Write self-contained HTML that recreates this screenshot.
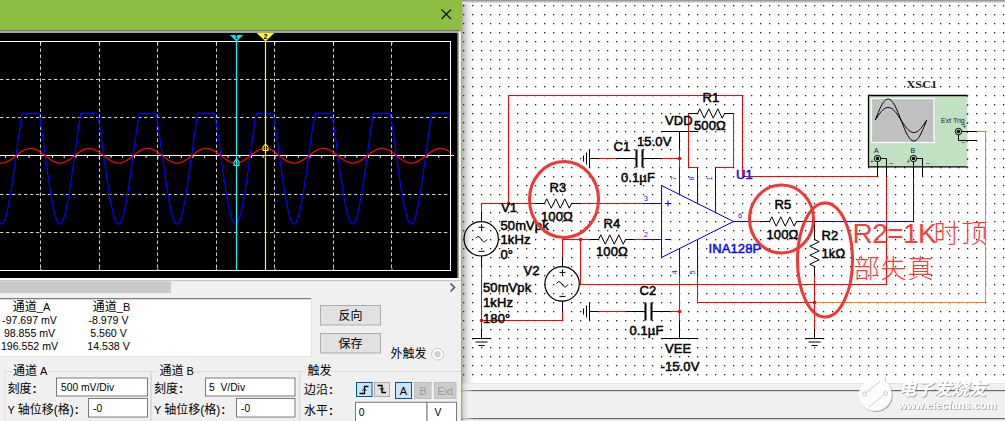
<!DOCTYPE html>
<html lang="zh"><head><meta charset="utf-8"><title>Oscilloscope - INA128P circuit</title>
<style>
html,body{margin:0;padding:0;background:#fff;}
body{width:1005px;height:421px;overflow:hidden;}
svg{display:block;}
text{font-family:"Liberation Sans","Noto Sans CJK SC",sans-serif;}
.cl{font-size:13px;font-weight:normal;fill:#000;stroke:#000;stroke-width:0.5px;letter-spacing:0.1px;}
.clb{font-size:13px;font-weight:normal;fill:#0a0aff;stroke:#0a0aff;stroke-width:0.5px;letter-spacing:0.1px;}
.pin{font-size:7.5px;fill:#2020ff;}
.ui{font-size:11px;fill:#000;}
.ro{font-size:10.6px;fill:#000;}
.in{font-size:10.3px;fill:#000;}
.uic{font-size:12px;fill:#000;}
.dis{font-size:11px;fill:#9a9a9a;}
.ann{font-size:26px;font-weight:300;fill:#fb3d3a;font-family:"Liberation Sans","Noto Sans CJK SC",sans-serif;}
.annl{font-size:28px;letter-spacing:-0.55px;}
.xsc{font-family:"Liberation Serif","Noto Serif CJK SC",serif;font-size:11px;font-weight:bold;fill:#1a1a1a;letter-spacing:0.2px;}
.tiny{font-size:7px;fill:#222;}
.tiny2{font-size:6.5px;fill:#222;}
.wm1{font-size:17px;font-weight:bold;font-style:italic;fill:#fff;}
.wm2{font-size:11px;font-weight:bold;fill:#fff;}
</style></head><body>
<svg width="1005" height="421" viewBox="0 0 1005 421">
<defs>
<pattern id="dots" x="463" y="5" width="9" height="9" patternUnits="userSpaceOnUse">
<rect x="0" y="0" width="1.3" height="1.3" fill="#1c1c1c"/>
</pattern>
<linearGradient id="shl" x1="0" x2="1" y1="0" y2="0">
<stop offset="0" stop-color="#b4b4b4"/><stop offset="0.35" stop-color="#e0e0e0"/><stop offset="1" stop-color="#ffffff" stop-opacity="0"/>
</linearGradient>
<linearGradient id="sht" x1="0" x2="0" y1="0" y2="1">
<stop offset="0" stop-color="#8a8a8a"/><stop offset="0.6" stop-color="#d0d0d0"/><stop offset="1" stop-color="#ffffff"/>
</linearGradient>
<filter id="wmsh" x="-10%" y="-10%" width="120%" height="130%">
<feDropShadow dx="0.8" dy="0.8" stdDeviation="0.6" flood-color="#666" flood-opacity="0.7"/>
</filter>
<clipPath id="scopeclip"><rect x="0" y="41" width="450" height="230"/></clipPath>
</defs>
<rect x="462.00" y="0.00" width="543.00" height="383.00" fill="#ffffff" />
<rect x="462.00" y="0.00" width="15.00" height="383.00" fill="url(#shl)" />
<rect x="462.00" y="0.00" width="543.00" height="3.50" fill="url(#sht)" />
<rect x="462.00" y="4.00" width="543.00" height="379.00" fill="url(#dots)" />
<rect x="462.00" y="383.00" width="543.00" height="38.00" fill="#f0f0f0" />
<rect x="462.00" y="383.00" width="543.00" height="1.00" fill="#e2e2e2" />
<rect x="462.00" y="390.00" width="543.00" height="1.20" fill="#6a6a6a" />
<rect x="462.00" y="418.00" width="543.00" height="1.20" fill="#6a6a6a" />
<rect x="462.00" y="383.00" width="12.00" height="38.00" fill="url(#shl)" opacity="0.6"/>
<g id="schematic" stroke-linecap="butt">
<polyline points="508.50,203.50 508.50,95.50 742.50,95.50 742.50,176.50 877.50,176.50" fill="none" stroke="#ff0000" stroke-width="1" />
<polyline points="481.50,212.50 481.50,203.50 535.50,203.50" fill="none" stroke="#ff0000" stroke-width="1" />
<line x1="580.50" y1="203.50" x2="643.50" y2="203.50" stroke="#ff0000" stroke-width="1" />
<line x1="643.50" y1="203.50" x2="661.50" y2="203.50" stroke="#0000ff" stroke-width="1" />
<line x1="535.50" y1="203.50" x2="544.50" y2="203.50" stroke="#000000" stroke-width="1" />
<polyline points="544.50,203.50 546.75,198.80 551.25,208.20 555.75,198.80 560.25,208.20 564.75,198.80 569.25,208.20 571.50,203.50" fill="none" stroke="#000000" stroke-width="1" stroke-linejoin="miter"/>
<line x1="571.50" y1="203.50" x2="580.50" y2="203.50" stroke="#000000" stroke-width="1" />
<line x1="589.50" y1="239.50" x2="598.50" y2="239.50" stroke="#000000" stroke-width="1" />
<polyline points="598.50,239.50 600.75,234.80 605.25,244.20 609.75,234.80 614.25,244.20 618.75,234.80 623.25,244.20 625.50,239.50" fill="none" stroke="#000000" stroke-width="1" stroke-linejoin="miter"/>
<line x1="625.50" y1="239.50" x2="634.50" y2="239.50" stroke="#000000" stroke-width="1" />
<line x1="688.50" y1="113.50" x2="697.50" y2="113.50" stroke="#000000" stroke-width="1" />
<polyline points="697.50,113.50 699.75,108.80 704.25,118.20 708.75,108.80 713.25,118.20 717.75,108.80 722.25,118.20 724.50,113.50" fill="none" stroke="#000000" stroke-width="1" stroke-linejoin="miter"/>
<line x1="724.50" y1="113.50" x2="733.50" y2="113.50" stroke="#000000" stroke-width="1" />
<line x1="760.50" y1="221.50" x2="769.50" y2="221.50" stroke="#000000" stroke-width="1" />
<polyline points="769.50,221.50 771.75,216.80 776.25,226.20 780.75,216.80 785.25,226.20 789.75,216.80 794.25,226.20 796.50,221.50" fill="none" stroke="#000000" stroke-width="1" stroke-linejoin="miter"/>
<line x1="796.50" y1="221.50" x2="805.50" y2="221.50" stroke="#000000" stroke-width="1" />
<polyline points="562.50,257.50 562.50,239.50 589.50,239.50" fill="none" stroke="#ff0000" stroke-width="1" />
<line x1="634.50" y1="239.50" x2="643.50" y2="239.50" stroke="#ff0000" stroke-width="1" />
<line x1="643.50" y1="239.50" x2="661.50" y2="239.50" stroke="#0000ff" stroke-width="1" />
<polyline points="580.50,239.50 580.50,284.50 886.50,284.50 886.50,176.50" fill="none" stroke="#ff0000" stroke-width="1" />
<line x1="481.50" y1="266.50" x2="481.50" y2="329.50" stroke="#ff0000" stroke-width="1" />
<polyline points="481.50,320.50 562.50,320.50 562.50,311.50" fill="none" stroke="#ff0000" stroke-width="1" />
<circle cx="481.20" cy="238.80" r="17.2" fill="none" stroke="#000000" stroke-width="1.2"/>
<line x1="481.50" y1="212.50" x2="481.50" y2="221.80" stroke="#000000" stroke-width="1" />
<line x1="481.50" y1="255.80" x2="481.50" y2="266.50" stroke="#000000" stroke-width="1" />
<line x1="478.50" y1="227.30" x2="484.50" y2="227.30" stroke="#000000" stroke-width="1" />
<line x1="481.50" y1="224.30" x2="481.50" y2="230.30" stroke="#000000" stroke-width="1" />
<line x1="478.50" y1="251.30" x2="484.50" y2="251.30" stroke="#000000" stroke-width="1" />
<path d="M475.70,238.30 q2.2,-3.4 4.2,-0.8 l2.6,3.4 q2,2.4 4.4,-1.4" fill="none" stroke="#000000" stroke-width="1"/>
<circle cx="562.10" cy="283.90" r="17.2" fill="none" stroke="#000000" stroke-width="1.2"/>
<line x1="562.50" y1="257.50" x2="562.50" y2="266.90" stroke="#000000" stroke-width="1" />
<line x1="562.50" y1="300.90" x2="562.50" y2="311.50" stroke="#000000" stroke-width="1" />
<line x1="559.50" y1="272.40" x2="565.50" y2="272.40" stroke="#000000" stroke-width="1" />
<line x1="562.50" y1="269.40" x2="562.50" y2="275.40" stroke="#000000" stroke-width="1" />
<line x1="559.50" y1="296.40" x2="565.50" y2="296.40" stroke="#000000" stroke-width="1" />
<path d="M556.60,283.40 q2.2,-3.4 4.2,-0.8 l2.6,3.4 q2,2.4 4.4,-1.4" fill="none" stroke="#000000" stroke-width="1"/>
<line x1="481.50" y1="329.50" x2="481.50" y2="338.50" stroke="#000000" stroke-width="1" />
<line x1="472.00" y1="338.50" x2="491.00" y2="338.50" stroke="#000000" stroke-width="1" />
<line x1="475.50" y1="342.00" x2="487.50" y2="342.00" stroke="#000000" stroke-width="1" />
<line x1="478.50" y1="345.50" x2="484.50" y2="345.50" stroke="#000000" stroke-width="1" />
<line x1="805.00" y1="338.50" x2="824.00" y2="338.50" stroke="#000000" stroke-width="1" />
<line x1="808.50" y1="342.00" x2="820.50" y2="342.00" stroke="#000000" stroke-width="1" />
<line x1="811.50" y1="345.50" x2="817.50" y2="345.50" stroke="#000000" stroke-width="1" />
<line x1="589.50" y1="149.50" x2="589.50" y2="167.50" stroke="#000000" stroke-width="1" />
<line x1="586.50" y1="152.50" x2="586.50" y2="164.50" stroke="#000000" stroke-width="1" />
<line x1="583.50" y1="155.50" x2="583.50" y2="161.50" stroke="#000000" stroke-width="1" />
<line x1="589.50" y1="158.50" x2="598.50" y2="158.50" stroke="#000000" stroke-width="1" />
<line x1="598.50" y1="158.50" x2="616.50" y2="158.50" stroke="#ff0000" stroke-width="1" />
<line x1="616.50" y1="158.50" x2="636.50" y2="158.50" stroke="#000000" stroke-width="1" />
<line x1="636.50" y1="149.50" x2="636.50" y2="167.50" stroke="#000000" stroke-width="2" />
<line x1="642.50" y1="149.50" x2="642.50" y2="167.50" stroke="#000000" stroke-width="2" />
<line x1="642.50" y1="158.50" x2="661.50" y2="158.50" stroke="#000000" stroke-width="1" />
<line x1="661.50" y1="158.50" x2="679.50" y2="158.50" stroke="#ff0000" stroke-width="1" />
<line x1="589.50" y1="302.50" x2="589.50" y2="320.50" stroke="#000000" stroke-width="1" />
<line x1="586.50" y1="305.50" x2="586.50" y2="317.50" stroke="#000000" stroke-width="1" />
<line x1="583.50" y1="308.50" x2="583.50" y2="314.50" stroke="#000000" stroke-width="1" />
<line x1="589.50" y1="311.50" x2="598.50" y2="311.50" stroke="#000000" stroke-width="1" />
<line x1="598.50" y1="311.50" x2="625.50" y2="311.50" stroke="#ff0000" stroke-width="1" />
<line x1="625.50" y1="311.50" x2="645.50" y2="311.50" stroke="#000000" stroke-width="1" />
<line x1="645.50" y1="302.50" x2="645.50" y2="320.50" stroke="#000000" stroke-width="2" />
<line x1="651.50" y1="302.50" x2="651.50" y2="320.50" stroke="#000000" stroke-width="2" />
<line x1="651.50" y1="311.50" x2="670.50" y2="311.50" stroke="#000000" stroke-width="1" />
<line x1="670.50" y1="311.50" x2="679.50" y2="311.50" stroke="#ff0000" stroke-width="1" />
<line x1="661.50" y1="131.50" x2="697.50" y2="131.50" stroke="#000000" stroke-width="1" />
<line x1="679.50" y1="131.50" x2="679.50" y2="149.50" stroke="#000000" stroke-width="1" />
<line x1="679.50" y1="149.50" x2="679.50" y2="167.50" stroke="#ff0000" stroke-width="1" />
<line x1="661.50" y1="338.50" x2="697.50" y2="338.50" stroke="#000000" stroke-width="1" />
<line x1="679.50" y1="320.50" x2="679.50" y2="338.50" stroke="#000000" stroke-width="1" />
<line x1="679.50" y1="275.50" x2="679.50" y2="320.50" stroke="#ff0000" stroke-width="1" />
<polyline points="688.50,113.50 688.50,167.50 697.50,167.50" fill="none" stroke="#ff0000" stroke-width="1" />
<polyline points="733.50,113.50 733.50,167.50 715.50,167.50" fill="none" stroke="#ff0000" stroke-width="1" />
<polyline points="697.50,275.50 697.50,302.50 814.50,302.50" fill="none" stroke="#ff0000" stroke-width="1" />
<line x1="814.50" y1="275.50" x2="814.50" y2="329.50" stroke="#ff0000" stroke-width="1" />
<line x1="814.50" y1="329.50" x2="814.50" y2="338.50" stroke="#000000" stroke-width="1" />
<polyline points="976.50,131.50 985.50,131.50 985.50,302.50 814.50,302.50" fill="none" stroke="#ff8000" stroke-width="1" />
<line x1="751.50" y1="221.50" x2="760.50" y2="221.50" stroke="#ff0000" stroke-width="1" />
<line x1="805.50" y1="221.50" x2="814.50" y2="221.50" stroke="#ff0000" stroke-width="1" />
<line x1="814.50" y1="221.50" x2="814.50" y2="239.50" stroke="#000000" stroke-width="1" />
<polyline points="814.50,239.50 819.20,241.75 809.80,246.25 819.20,250.75 809.80,255.25 819.20,259.75 809.80,264.25 814.50,266.50" fill="none" stroke="#000000" stroke-width="1" />
<line x1="814.50" y1="266.50" x2="814.50" y2="275.50" stroke="#000000" stroke-width="1" />
<polyline points="814.50,221.50 913.50,221.50 913.50,176.50" fill="none" stroke="#0000ff" stroke-width="1" />
<polyline points="661.50,185.50 733.50,221.50 661.50,257.50 661.50,185.50" fill="none" stroke="#0000ff" stroke-width="1" stroke-linejoin="round"/>
<line x1="679.50" y1="167.50" x2="679.50" y2="194.50" stroke="#0000ff" stroke-width="1" />
<line x1="697.50" y1="167.50" x2="697.50" y2="203.50" stroke="#0000ff" stroke-width="1" />
<line x1="715.50" y1="167.50" x2="715.50" y2="212.50" stroke="#0000ff" stroke-width="1" />
<line x1="679.50" y1="248.50" x2="679.50" y2="275.50" stroke="#0000ff" stroke-width="1" />
<line x1="697.50" y1="239.50" x2="697.50" y2="275.50" stroke="#0000ff" stroke-width="1" />
<line x1="733.50" y1="221.50" x2="751.50" y2="221.50" stroke="#0000ff" stroke-width="1" />
<line x1="665.00" y1="203.50" x2="671.00" y2="203.50" stroke="#0000ff" stroke-width="1" />
<line x1="668.00" y1="200.50" x2="668.00" y2="206.50" stroke="#0000ff" stroke-width="1" />
<line x1="665.00" y1="239.50" x2="671.00" y2="239.50" stroke="#0000ff" stroke-width="1" />
<circle cx="508.50" cy="203.50" r="1.8" fill="#ff0000"/>
<circle cx="580.50" cy="239.50" r="1.8" fill="#ff0000"/>
<circle cx="679.50" cy="158.50" r="1.8" fill="#ff0000"/>
<circle cx="679.50" cy="311.50" r="1.8" fill="#ff0000"/>
<circle cx="481.50" cy="320.50" r="1.8" fill="#ff0000"/>
<circle cx="814.50" cy="302.50" r="1.8" fill="#ff0000"/>
<rect x="868.00" y="95.00" width="99.50" height="72.00" fill="#c2e0c2" />
<polyline points="967.50,95.50 868.50,95.50 868.50,166.80 967.50,166.80" fill="none" stroke="#000" stroke-width="1.3" />
<line x1="967.30" y1="95.00" x2="967.30" y2="167.00" stroke="#333" stroke-width="1" stroke-dasharray="1.5 7.5" stroke-dashoffset="-0.5"/>
<rect x="871.50" y="98.50" width="62.50" height="44.00" fill="#c0c0c0" stroke="#ffffff" stroke-width="1.2" />
<polyline points="875.30,120.00 876.29,117.47 877.28,114.97 878.27,112.55 879.25,110.24 880.24,108.07 881.23,106.07 882.22,104.28 883.21,102.72 884.20,101.41 885.18,100.36 886.17,99.61 887.16,99.15 888.15,99.00 889.14,99.15 890.13,99.61 891.12,100.36 892.10,101.41 893.09,102.72 894.08,104.28 895.07,106.07 896.06,108.07 897.05,110.24 898.03,112.55 899.02,114.97 900.01,117.47 901.00,120.00 901.99,122.53 902.98,125.03 903.97,127.45 904.95,129.76 905.94,131.93 906.93,133.93 907.92,135.72 908.91,137.28 909.90,138.59 910.88,139.64 911.87,140.39 912.86,140.85 913.85,141.00 914.84,140.85 915.83,140.39 916.82,139.64 917.80,138.59 918.79,137.28 919.78,135.72 920.77,133.93 921.76,131.93 922.75,129.76 923.73,127.45 924.72,125.03 925.71,122.53 926.70,120.00" fill="none" stroke="#000" stroke-width="1" stroke-linejoin="round"/>
<polyline points="875.30,120.00 876.29,118.48 877.28,116.98 878.27,115.53 879.25,114.14 880.24,112.84 881.23,111.64 882.22,110.57 883.21,109.63 884.20,108.84 885.18,108.22 886.17,107.77 887.16,107.49 888.15,107.40 889.14,107.49 890.13,107.77 891.12,108.22 892.10,108.84 893.09,109.63 894.08,110.57 895.07,111.64 896.06,112.84 897.05,114.14 898.03,115.53 899.02,116.98 900.01,118.48 901.00,120.00 901.99,121.52 902.98,123.02 903.97,124.47 904.95,125.86 905.94,127.16 906.93,128.36 907.92,129.43 908.91,130.37 909.90,131.16 910.88,131.78 911.87,132.23 912.86,132.51 913.85,132.60 914.84,132.51 915.83,132.23 916.82,131.78 917.80,131.16 918.79,130.37 919.78,129.43 920.77,128.36 921.76,127.16 922.75,125.86 923.73,124.47 924.72,123.02 925.71,121.52 926.70,120.00" fill="none" stroke="#000" stroke-width="1" stroke-linejoin="round"/>
<polyline points="877.50,158.50 877.50,176.50" fill="none" stroke="#000000" stroke-width="1" />
<polyline points="877.50,158.50 886.50,158.50 886.50,176.50" fill="none" stroke="#000000" stroke-width="1" />
<polyline points="913.50,158.50 913.50,176.50" fill="none" stroke="#000000" stroke-width="1" />
<polyline points="913.50,158.50 922.50,158.50 922.50,176.50" fill="none" stroke="#000000" stroke-width="1" />
<line x1="958.50" y1="131.50" x2="976.50" y2="131.50" stroke="#000000" stroke-width="1" />
<polyline points="958.50,131.50 958.50,140.50 976.50,140.50" fill="none" stroke="#000000" stroke-width="1" />
<circle cx="877.50" cy="158.50" r="3.2" fill="#c2e0c2" stroke="#000" stroke-width="1"/>
<circle cx="877.50" cy="158.50" r="1.7" fill="#000"/>
<circle cx="913.50" cy="158.50" r="3.2" fill="#c2e0c2" stroke="#000" stroke-width="1"/>
<circle cx="913.50" cy="158.50" r="1.7" fill="#000"/>
<circle cx="958.50" cy="131.50" r="3.2" fill="#c2e0c2" stroke="#000" stroke-width="1"/>
<circle cx="958.50" cy="131.50" r="1.7" fill="#000"/>
<text x="874.00" y="153.00" class="tiny" >A</text>
<text x="910.50" y="153.00" class="tiny" >B</text>
<text x="941.00" y="122.50" class="tiny" >Ext Trig</text>
<text x="870.00" y="163.50" class="tiny2" >+</text>
<text x="889.50" y="163.50" class="tiny2" dy="-2">_</text>
<text x="906.50" y="163.50" class="tiny2" >+</text>
<text x="926.00" y="163.50" class="tiny2" dy="-2">_</text>
<text x="962.50" y="128.50" class="tiny2" >+</text>
<text x="961.50" y="143.00" class="tiny2" dy="-2">_</text>
<text class="xsc" transform="translate(906.4,87.6) scale(1.09,1)">XSC1</text>
<text x="702.50" y="101.50" class="cl" >R1</text>
<text x="694.00" y="130.00" class="cl" >500Ω</text>
<text x="665.00" y="124.50" class="cl" >VDD</text>
<text x="637.00" y="145.50" class="cl" >15.0V</text>
<text x="613.50" y="150.50" class="cl" >C1</text>
<text x="621.00" y="181.50" class="cl" >0.1µF</text>
<text x="549.50" y="191.50" class="cl" >R3</text>
<text x="541.00" y="221.00" class="cl" >100Ω</text>
<text x="501.00" y="211.50" class="cl" >V1</text>
<text x="500.50" y="229.50" class="cl" >50mVpk</text>
<text x="500.50" y="244.00" class="cl" >1kHz</text>
<text x="500.50" y="258.50" class="cl" >0°</text>
<text x="603.50" y="227.50" class="cl" >R4</text>
<text x="596.00" y="256.00" class="cl" >100Ω</text>
<text x="523.50" y="275.00" class="cl" >V2</text>
<text x="483.00" y="291.50" class="cl" >50mVpk</text>
<text x="483.00" y="307.00" class="cl" >1kHz</text>
<text x="483.00" y="322.50" class="cl" >180°</text>
<text x="639.50" y="295.00" class="cl" >C2</text>
<text x="629.50" y="334.50" class="cl" >0.1µF</text>
<text x="665.00" y="352.50" class="cl" >VEE</text>
<text x="660.50" y="370.50" class="cl" >-15.0V</text>
<text x="774.50" y="209.00" class="cl" >R5</text>
<text x="766.50" y="238.50" class="cl" >100Ω</text>
<text x="821.50" y="239.50" class="cl" >R2</text>
<text x="821.50" y="257.50" class="cl" >1kΩ</text>
<text x="736.00" y="178.50" class="clb" >U1</text>
<text x="708.50" y="252.50" class="clb" >INA128P</text>
<text x="643.80" y="200.50" class="pin" >3</text>
<text x="643.80" y="236.50" class="pin" >2</text>
<text x="738.00" y="218.00" class="pin" >6</text>
<text class="pin" transform="translate(676,178.3) rotate(-90)" text-anchor="middle">7</text>
<text class="pin" transform="translate(694,178.3) rotate(-90)" text-anchor="middle">8</text>
<text class="pin" transform="translate(712,178.3) rotate(-90)" text-anchor="middle">1</text>
<text class="pin" transform="translate(676.5,272.5) rotate(-90)" text-anchor="middle">4</text>
<text class="pin" transform="translate(694.5,272.5) rotate(-90)" text-anchor="middle">5</text>
<ellipse cx="564" cy="199.5" rx="34.5" ry="38" fill="none" stroke="#f23535" stroke-width="3"/>
<ellipse cx="781.5" cy="219" rx="32" ry="34" fill="none" stroke="#f23535" stroke-width="3"/>
<ellipse cx="825" cy="260" rx="27.5" ry="57" fill="none" stroke="#f23535" stroke-width="3"/>
<text x="852.6" y="242.6" class="ann"><tspan class="annl">R2=1K</tspan><tspan x="933.6" y="243.2" style="letter-spacing:1.6px">时顶</tspan></text>
<text x="853.40" y="278.30" class="ann" style="letter-spacing:1px">部失真</text>
</g>
<g id="watermark" filter="url(#wmsh)" opacity="0.95">
<circle cx="875.3" cy="394.5" r="16.5" fill="#fff"/>
<path d="M883.5,368 C885,378 884,382 879,385 L886,390 Z" fill="#fff"/>
<path d="M865,393.5 L880,381.5 M869,407 L885.5,393.5" stroke="#c8c8c8" stroke-width="1" fill="none"/>
<circle cx="864.5" cy="394" r="2" fill="#fff" stroke="#c8c8c8" stroke-width="1"/>
<circle cx="885.5" cy="393.5" r="2" fill="#fff" stroke="#c8c8c8" stroke-width="1"/>
<text x="898.50" y="394.50" class="wm1" textLength="88" lengthAdjust="spacingAndGlyphs">电子发烧友</text>
<text x="898.50" y="409.00" class="wm2" textLength="98" lengthAdjust="spacingAndGlyphs">www.elecfans.com</text>
</g>
<g id="scope">
<rect x="0.00" y="0.00" width="462.00" height="421.00" fill="#f0f0f0" />
<rect x="0.00" y="0.00" width="462.00" height="30.00" fill="#8dbd41" />
<rect x="461.00" y="0.00" width="1.20" height="421.00" fill="#8dbd41" />
<line x1="441.50" y1="9.50" x2="451.00" y2="19.00" stroke="#111" stroke-width="1.2" />
<line x1="451.00" y1="9.50" x2="441.50" y2="19.00" stroke="#111" stroke-width="1.2" />
<rect x="0.00" y="30.00" width="460.50" height="1.50" fill="#6e6e6e" />
<rect x="0.00" y="31.50" width="460.50" height="1.50" fill="#a2a2a2" />
<rect x="0.00" y="33.00" width="458.50" height="245.00" fill="#000" />
<rect x="458.50" y="31.50" width="1.80" height="249.00" fill="#ffffff" />
<rect x="457.30" y="33.00" width="1.20" height="246.00" fill="#8a8a8a" />
<rect x="0.00" y="278.00" width="460.00" height="2.30" fill="#ffffff" />
<line x1="391.50" y1="41.50" x2="391.50" y2="270.50" stroke="#d0d0d0" stroke-width="1" stroke-dasharray="3.4 2.6" stroke-dashoffset="-1"/>
<line x1="333.50" y1="41.50" x2="333.50" y2="270.50" stroke="#d0d0d0" stroke-width="1" stroke-dasharray="3.4 2.6" stroke-dashoffset="-1"/>
<line x1="274.50" y1="41.50" x2="274.50" y2="270.50" stroke="#d0d0d0" stroke-width="1" stroke-dasharray="3.4 2.6" stroke-dashoffset="-1"/>
<line x1="216.50" y1="41.50" x2="216.50" y2="270.50" stroke="#d0d0d0" stroke-width="1" stroke-dasharray="3.4 2.6" stroke-dashoffset="-1"/>
<line x1="157.50" y1="41.50" x2="157.50" y2="270.50" stroke="#d0d0d0" stroke-width="1" stroke-dasharray="3.4 2.6" stroke-dashoffset="-1"/>
<line x1="99.50" y1="41.50" x2="99.50" y2="270.50" stroke="#d0d0d0" stroke-width="1" stroke-dasharray="3.4 2.6" stroke-dashoffset="-1"/>
<line x1="40.50" y1="41.50" x2="40.50" y2="270.50" stroke="#d0d0d0" stroke-width="1" stroke-dasharray="3.4 2.6" stroke-dashoffset="-1"/>
<line x1="0.00" y1="79.50" x2="450.50" y2="79.50" stroke="#d0d0d0" stroke-width="1" stroke-dasharray="3.4 2.6"/>
<line x1="0.00" y1="117.50" x2="450.50" y2="117.50" stroke="#d0d0d0" stroke-width="1" stroke-dasharray="3.4 2.6"/>
<line x1="0.00" y1="194.50" x2="450.50" y2="194.50" stroke="#d0d0d0" stroke-width="1" stroke-dasharray="3.4 2.6"/>
<line x1="0.00" y1="232.50" x2="450.50" y2="232.50" stroke="#d0d0d0" stroke-width="1" stroke-dasharray="3.4 2.6"/>
<line x1="0.00" y1="41.50" x2="451.00" y2="41.50" stroke="#fff" stroke-width="1" />
<line x1="0.00" y1="270.50" x2="451.00" y2="270.50" stroke="#fff" stroke-width="1" />
<line x1="450.50" y1="41.00" x2="450.50" y2="271.00" stroke="#fff" stroke-width="1" />
<line x1="0.00" y1="155.50" x2="454.00" y2="155.50" stroke="#fff" stroke-width="1.2" />
<line x1="450.50" y1="155.75" x2="450.50" y2="158.95" stroke="#fff" stroke-width="1" />
<line x1="438.79" y1="155.75" x2="438.79" y2="157.95" stroke="#fff" stroke-width="1" />
<line x1="427.09" y1="155.75" x2="427.09" y2="157.95" stroke="#fff" stroke-width="1" />
<line x1="415.38" y1="155.75" x2="415.38" y2="157.95" stroke="#fff" stroke-width="1" />
<line x1="403.68" y1="155.75" x2="403.68" y2="157.95" stroke="#fff" stroke-width="1" />
<line x1="391.97" y1="155.75" x2="391.97" y2="158.95" stroke="#fff" stroke-width="1" />
<line x1="380.26" y1="155.75" x2="380.26" y2="157.95" stroke="#fff" stroke-width="1" />
<line x1="368.56" y1="155.75" x2="368.56" y2="157.95" stroke="#fff" stroke-width="1" />
<line x1="356.85" y1="155.75" x2="356.85" y2="157.95" stroke="#fff" stroke-width="1" />
<line x1="345.15" y1="155.75" x2="345.15" y2="157.95" stroke="#fff" stroke-width="1" />
<line x1="333.44" y1="155.75" x2="333.44" y2="158.95" stroke="#fff" stroke-width="1" />
<line x1="321.73" y1="155.75" x2="321.73" y2="157.95" stroke="#fff" stroke-width="1" />
<line x1="310.03" y1="155.75" x2="310.03" y2="157.95" stroke="#fff" stroke-width="1" />
<line x1="298.32" y1="155.75" x2="298.32" y2="157.95" stroke="#fff" stroke-width="1" />
<line x1="286.62" y1="155.75" x2="286.62" y2="157.95" stroke="#fff" stroke-width="1" />
<line x1="274.91" y1="155.75" x2="274.91" y2="158.95" stroke="#fff" stroke-width="1" />
<line x1="263.20" y1="155.75" x2="263.20" y2="157.95" stroke="#fff" stroke-width="1" />
<line x1="251.50" y1="155.75" x2="251.50" y2="157.95" stroke="#fff" stroke-width="1" />
<line x1="239.79" y1="155.75" x2="239.79" y2="157.95" stroke="#fff" stroke-width="1" />
<line x1="228.09" y1="155.75" x2="228.09" y2="157.95" stroke="#fff" stroke-width="1" />
<line x1="216.38" y1="155.75" x2="216.38" y2="158.95" stroke="#fff" stroke-width="1" />
<line x1="204.67" y1="155.75" x2="204.67" y2="157.95" stroke="#fff" stroke-width="1" />
<line x1="192.97" y1="155.75" x2="192.97" y2="157.95" stroke="#fff" stroke-width="1" />
<line x1="181.26" y1="155.75" x2="181.26" y2="157.95" stroke="#fff" stroke-width="1" />
<line x1="169.56" y1="155.75" x2="169.56" y2="157.95" stroke="#fff" stroke-width="1" />
<line x1="157.85" y1="155.75" x2="157.85" y2="158.95" stroke="#fff" stroke-width="1" />
<line x1="146.14" y1="155.75" x2="146.14" y2="157.95" stroke="#fff" stroke-width="1" />
<line x1="134.44" y1="155.75" x2="134.44" y2="157.95" stroke="#fff" stroke-width="1" />
<line x1="122.73" y1="155.75" x2="122.73" y2="157.95" stroke="#fff" stroke-width="1" />
<line x1="111.03" y1="155.75" x2="111.03" y2="157.95" stroke="#fff" stroke-width="1" />
<line x1="99.32" y1="155.75" x2="99.32" y2="158.95" stroke="#fff" stroke-width="1" />
<line x1="87.61" y1="155.75" x2="87.61" y2="157.95" stroke="#fff" stroke-width="1" />
<line x1="75.91" y1="155.75" x2="75.91" y2="157.95" stroke="#fff" stroke-width="1" />
<line x1="64.20" y1="155.75" x2="64.20" y2="157.95" stroke="#fff" stroke-width="1" />
<line x1="52.50" y1="155.75" x2="52.50" y2="157.95" stroke="#fff" stroke-width="1" />
<line x1="40.79" y1="155.75" x2="40.79" y2="158.95" stroke="#fff" stroke-width="1" />
<line x1="29.08" y1="155.75" x2="29.08" y2="157.95" stroke="#fff" stroke-width="1" />
<line x1="17.38" y1="155.75" x2="17.38" y2="157.95" stroke="#fff" stroke-width="1" />
<line x1="5.67" y1="155.75" x2="5.67" y2="157.95" stroke="#fff" stroke-width="1" />
<line x1="391.97" y1="41.50" x2="391.97" y2="43.50" stroke="#fff" stroke-width="1" />
<line x1="391.97" y1="268.50" x2="391.97" y2="270.50" stroke="#fff" stroke-width="1" />
<line x1="333.44" y1="41.50" x2="333.44" y2="43.50" stroke="#fff" stroke-width="1" />
<line x1="333.44" y1="268.50" x2="333.44" y2="270.50" stroke="#fff" stroke-width="1" />
<line x1="274.91" y1="41.50" x2="274.91" y2="43.50" stroke="#fff" stroke-width="1" />
<line x1="274.91" y1="268.50" x2="274.91" y2="270.50" stroke="#fff" stroke-width="1" />
<line x1="216.38" y1="41.50" x2="216.38" y2="43.50" stroke="#fff" stroke-width="1" />
<line x1="216.38" y1="268.50" x2="216.38" y2="270.50" stroke="#fff" stroke-width="1" />
<line x1="157.85" y1="41.50" x2="157.85" y2="43.50" stroke="#fff" stroke-width="1" />
<line x1="157.85" y1="268.50" x2="157.85" y2="270.50" stroke="#fff" stroke-width="1" />
<line x1="99.32" y1="41.50" x2="99.32" y2="43.50" stroke="#fff" stroke-width="1" />
<line x1="99.32" y1="268.50" x2="99.32" y2="270.50" stroke="#fff" stroke-width="1" />
<line x1="40.79" y1="41.50" x2="40.79" y2="43.50" stroke="#fff" stroke-width="1" />
<line x1="40.79" y1="268.50" x2="40.79" y2="270.50" stroke="#fff" stroke-width="1" />
<g clip-path="url(#scopeclip)">
<polyline points="-2.00,219.64 -1.50,220.85 -1.00,221.86 -0.50,222.69 0.00,223.32 0.50,223.76 1.00,224.00 1.50,224.04 2.00,223.89 2.50,223.54 3.00,223.00 3.50,222.26 4.00,221.34 4.50,220.22 5.00,218.92 5.50,217.43 6.00,215.77 6.50,213.93 7.00,211.93 7.50,209.77 8.00,207.45 8.50,204.98 9.00,202.36 9.50,199.62 10.00,196.75 10.50,193.76 11.00,190.66 11.50,187.46 12.00,184.17 12.50,180.80 13.00,177.35 13.50,173.84 14.00,170.28 14.50,166.68 15.00,163.05 15.50,159.40 16.00,155.73 16.50,152.07 17.00,148.41 17.50,144.78 18.00,141.18 18.50,137.62 19.00,134.11 19.50,130.67 20.00,127.30 20.50,124.01 21.00,120.81 21.50,117.71 22.00,114.72 22.50,113.25 23.00,113.25 23.50,113.25 24.00,113.25 24.50,113.25 25.00,113.25 25.50,113.25 26.00,113.25 26.50,113.25 27.00,113.25 27.50,113.25 28.00,113.25 28.50,113.25 29.00,113.25 29.50,113.25 30.00,113.25 30.50,113.25 31.00,113.25 31.50,113.25 32.00,113.25 32.50,113.25 33.00,113.25 33.50,113.25 34.00,113.25 34.50,113.25 35.00,113.25 35.50,113.25 36.00,113.25 36.50,113.25 37.00,113.25 37.50,113.25 38.00,113.25 38.50,113.25 39.00,113.25 39.50,116.14 40.00,119.19 40.50,122.33 41.00,125.58 41.50,128.91 42.00,132.32 42.50,135.79 43.00,139.32 43.50,142.90 44.00,146.52 44.50,150.17 45.00,153.83 45.50,157.49 46.00,161.15 46.50,164.80 47.00,168.42 47.50,172.00 48.00,175.53 48.50,179.01 49.00,182.42 49.50,185.76 50.00,189.01 50.50,192.16 51.00,195.21 51.50,198.14 52.00,200.95 52.50,203.64 53.00,206.18 53.50,208.58 54.00,210.82 54.50,212.91 55.00,214.84 55.50,216.59 56.00,218.17 56.50,219.56 57.00,220.78 57.50,221.81 58.00,222.64 58.50,223.29 59.00,223.74 59.50,223.99 60.00,224.05 60.50,223.91 61.00,223.57 61.50,223.04 62.00,222.31 62.50,221.40 63.00,220.29 63.50,219.00 64.00,217.53 64.50,215.87 65.00,214.05 65.50,212.05 66.00,209.90 66.50,207.59 67.00,205.13 67.50,202.53 68.00,199.79 68.50,196.92 69.00,193.94 69.50,190.85 70.00,187.65 70.50,184.37 71.00,181.00 71.50,177.56 72.00,174.06 72.50,170.50 73.00,166.90 73.50,163.27 74.00,159.62 74.50,155.95 75.00,152.29 75.50,148.63 76.00,145.00 76.50,141.40 77.00,137.83 77.50,134.32 78.00,130.88 78.50,127.50 79.00,124.20 79.50,121.00 80.00,117.89 80.50,114.90 81.00,113.25 81.50,113.25 82.00,113.25 82.50,113.25 83.00,113.25 83.50,113.25 84.00,113.25 84.50,113.25 85.00,113.25 85.50,113.25 86.00,113.25 86.50,113.25 87.00,113.25 87.50,113.25 88.00,113.25 88.50,113.25 89.00,113.25 89.50,113.25 90.00,113.25 90.50,113.25 91.00,113.25 91.50,113.25 92.00,113.25 92.50,113.25 93.00,113.25 93.50,113.25 94.00,113.25 94.50,113.25 95.00,113.25 95.50,113.25 96.00,113.25 96.50,113.25 97.00,113.25 97.50,113.25 98.00,115.96 98.50,119.00 99.00,122.14 99.50,125.38 100.00,128.71 100.50,132.11 101.00,135.58 101.50,139.11 102.00,142.69 102.50,146.30 103.00,149.95 103.50,153.61 104.00,157.27 104.50,160.93 105.00,164.58 105.50,168.20 106.00,171.78 106.50,175.32 107.00,178.81 107.50,182.22 108.00,185.56 108.50,188.81 109.00,191.97 109.50,195.03 110.00,197.97 110.50,200.79 111.00,203.48 111.50,206.03 112.00,208.44 112.50,210.69 113.00,212.79 113.50,214.72 114.00,216.49 114.50,218.08 115.00,219.49 115.50,220.71 116.00,221.75 116.50,222.60 117.00,223.25 117.50,223.71 118.00,223.98 118.50,224.05 119.00,223.92 119.50,223.60 120.00,223.08 120.50,222.36 121.00,221.46 121.50,220.36 122.00,219.08 122.50,217.62 123.00,215.98 123.50,214.16 124.00,212.18 124.50,210.03 125.00,207.73 125.50,205.28 126.00,202.69 126.50,199.96 127.00,197.10 127.50,194.12 128.00,191.04 128.50,187.85 129.00,184.57 129.50,181.20 130.00,177.77 130.50,174.27 131.00,170.71 131.50,167.12 132.00,163.49 132.50,159.84 133.00,156.17 133.50,152.51 134.00,148.85 134.50,145.22 135.00,141.61 135.50,138.05 136.00,134.53 136.50,131.08 137.00,127.70 137.50,124.40 138.00,121.19 138.50,118.08 139.00,115.08 139.50,113.25 140.00,113.25 140.50,113.25 141.00,113.25 141.50,113.25 142.00,113.25 142.50,113.25 143.00,113.25 143.50,113.25 144.00,113.25 144.50,113.25 145.00,113.25 145.50,113.25 146.00,113.25 146.50,113.25 147.00,113.25 147.50,113.25 148.00,113.25 148.50,113.25 149.00,113.25 149.50,113.25 150.00,113.25 150.50,113.25 151.00,113.25 151.50,113.25 152.00,113.25 152.50,113.25 153.00,113.25 153.50,113.25 154.00,113.25 154.50,113.25 155.00,113.25 155.50,113.25 156.00,113.25 156.50,115.79 157.00,118.81 157.50,121.95 158.00,125.18 158.50,128.50 159.00,131.90 159.50,135.37 160.00,138.90 160.50,142.47 161.00,146.09 161.50,149.73 162.00,153.39 162.50,157.05 163.00,160.71 163.50,164.36 164.00,167.98 164.50,171.57 165.00,175.11 165.50,178.60 166.00,182.02 166.50,185.36 167.00,188.62 167.50,191.79 168.00,194.85 168.50,197.80 169.00,200.62 169.50,203.32 170.00,205.88 170.50,208.30 171.00,210.56 171.50,212.67 172.00,214.61 172.50,216.39 173.00,217.99 173.50,219.41 174.00,220.64 174.50,221.69 175.00,222.55 175.50,223.22 176.00,223.69 176.50,223.97 177.00,224.05 177.50,223.93 178.00,223.62 178.50,223.11 179.00,222.41 179.50,221.52 180.00,220.43 180.50,219.16 181.00,217.71 181.50,216.08 182.00,214.28 182.50,212.30 183.00,210.17 183.50,207.87 184.00,205.43 184.50,202.84 185.00,200.12 185.50,197.27 186.00,194.30 186.50,191.22 187.00,188.04 187.50,184.77 188.00,181.41 188.50,177.98 189.00,174.48 189.50,170.93 190.00,167.33 190.50,163.71 191.00,160.05 191.50,156.39 192.00,152.73 192.50,149.07 193.00,145.43 193.50,141.83 194.00,138.26 194.50,134.74 195.00,131.29 195.50,127.90 196.00,124.59 196.50,121.38 197.00,118.26 197.50,115.25 198.00,113.25 198.50,113.25 199.00,113.25 199.50,113.25 200.00,113.25 200.50,113.25 201.00,113.25 201.50,113.25 202.00,113.25 202.50,113.25 203.00,113.25 203.50,113.25 204.00,113.25 204.50,113.25 205.00,113.25 205.50,113.25 206.00,113.25 206.50,113.25 207.00,113.25 207.50,113.25 208.00,113.25 208.50,113.25 209.00,113.25 209.50,113.25 210.00,113.25 210.50,113.25 211.00,113.25 211.50,113.25 212.00,113.25 212.50,113.25 213.00,113.25 213.50,113.25 214.00,113.25 214.50,113.25 215.00,115.61 215.50,118.63 216.00,121.76 216.50,124.99 217.00,128.30 217.50,131.70 218.00,135.16 218.50,138.68 219.00,142.26 219.50,145.87 220.00,149.51 220.50,153.17 221.00,156.83 221.50,160.49 222.00,164.14 222.50,167.77 223.00,171.36 223.50,174.90 224.00,178.39 224.50,181.82 225.00,185.16 225.50,188.43 226.00,191.60 226.50,194.67 227.00,197.62 227.50,200.46 228.00,203.16 228.50,205.73 229.00,208.16 229.50,210.43 230.00,212.55 230.50,214.50 231.00,216.29 231.50,217.90 232.00,219.33 232.50,220.57 233.00,221.63 233.50,222.51 234.00,223.18 234.50,223.67 235.00,223.96 235.50,224.05 236.00,223.95 236.50,223.64 237.00,223.15 237.50,222.46 238.00,221.58 238.50,220.50 239.00,219.25 239.50,217.80 240.00,216.18 240.50,214.39 241.00,212.43 241.50,210.30 242.00,208.02 242.50,205.58 243.00,203.00 243.50,200.29 244.00,197.45 244.50,194.49 245.00,191.41 245.50,188.24 246.00,184.97 246.50,181.61 247.00,178.18 247.50,174.69 248.00,171.14 248.50,167.55 249.00,163.92 249.50,160.27 250.00,156.61 250.50,152.95 251.00,149.29 251.50,145.65 252.00,142.04 252.50,138.47 253.00,134.95 253.50,131.49 254.00,128.10 254.50,124.79 255.00,121.57 255.50,118.45 256.00,115.43 256.50,113.25 257.00,113.25 257.50,113.25 258.00,113.25 258.50,113.25 259.00,113.25 259.50,113.25 260.00,113.25 260.50,113.25 261.00,113.25 261.50,113.25 262.00,113.25 262.50,113.25 263.00,113.25 263.50,113.25 264.00,113.25 264.50,113.25 265.00,113.25 265.50,113.25 266.00,113.25 266.50,113.25 267.00,113.25 267.50,113.25 268.00,113.25 268.50,113.25 269.00,113.25 269.50,113.25 270.00,113.25 270.50,113.25 271.00,113.25 271.50,113.25 272.00,113.25 272.50,113.25 273.00,113.25 273.50,115.43 274.00,118.45 274.50,121.57 275.00,124.79 275.50,128.10 276.00,131.49 276.50,134.95 277.00,138.47 277.50,142.04 278.00,145.65 278.50,149.29 279.00,152.95 279.50,156.61 280.00,160.27 280.50,163.92 281.00,167.55 281.50,171.14 282.00,174.69 282.50,178.18 283.00,181.61 283.50,184.97 284.00,188.24 284.50,191.41 285.00,194.49 285.50,197.45 286.00,200.29 286.50,203.00 287.00,205.58 287.50,208.02 288.00,210.30 288.50,212.43 289.00,214.39 289.50,216.18 290.00,217.80 290.50,219.25 291.00,220.50 291.50,221.58 292.00,222.46 292.50,223.15 293.00,223.64 293.50,223.95 294.00,224.05 294.50,223.96 295.00,223.67 295.50,223.18 296.00,222.51 296.50,221.63 297.00,220.57 297.50,219.33 298.00,217.90 298.50,216.29 299.00,214.50 299.50,212.55 300.00,210.43 300.50,208.16 301.00,205.73 301.50,203.16 302.00,200.46 302.50,197.62 303.00,194.67 303.50,191.60 304.00,188.43 304.50,185.16 305.00,181.82 305.50,178.39 306.00,174.90 306.50,171.36 307.00,167.77 307.50,164.14 308.00,160.49 308.50,156.83 309.00,153.17 309.50,149.51 310.00,145.87 310.50,142.26 311.00,138.68 311.50,135.16 312.00,131.70 312.50,128.30 313.00,124.99 313.50,121.76 314.00,118.63 314.50,115.61 315.00,113.25 315.50,113.25 316.00,113.25 316.50,113.25 317.00,113.25 317.50,113.25 318.00,113.25 318.50,113.25 319.00,113.25 319.50,113.25 320.00,113.25 320.50,113.25 321.00,113.25 321.50,113.25 322.00,113.25 322.50,113.25 323.00,113.25 323.50,113.25 324.00,113.25 324.50,113.25 325.00,113.25 325.50,113.25 326.00,113.25 326.50,113.25 327.00,113.25 327.50,113.25 328.00,113.25 328.50,113.25 329.00,113.25 329.50,113.25 330.00,113.25 330.50,113.25 331.00,113.25 331.50,113.25 332.00,115.25 332.50,118.26 333.00,121.38 333.50,124.59 334.00,127.90 334.50,131.29 335.00,134.74 335.50,138.26 336.00,141.83 336.50,145.43 337.00,149.07 337.50,152.73 338.00,156.39 338.50,160.05 339.00,163.71 339.50,167.33 340.00,170.93 340.50,174.48 341.00,177.98 341.50,181.41 342.00,184.77 342.50,188.04 343.00,191.22 343.50,194.30 344.00,197.27 344.50,200.12 345.00,202.84 345.50,205.43 346.00,207.87 346.50,210.17 347.00,212.30 347.50,214.28 348.00,216.08 348.50,217.71 349.00,219.16 349.50,220.43 350.00,221.52 350.50,222.41 351.00,223.11 351.50,223.62 352.00,223.93 352.50,224.05 353.00,223.97 353.50,223.69 354.00,223.22 354.50,222.55 355.00,221.69 355.50,220.64 356.00,219.41 356.50,217.99 357.00,216.39 357.50,214.61 358.00,212.67 358.50,210.56 359.00,208.30 359.50,205.88 360.00,203.32 360.50,200.62 361.00,197.80 361.50,194.85 362.00,191.79 362.50,188.62 363.00,185.36 363.50,182.02 364.00,178.60 364.50,175.11 365.00,171.57 365.50,167.98 366.00,164.36 366.50,160.71 367.00,157.05 367.50,153.39 368.00,149.73 368.50,146.09 369.00,142.47 369.50,138.90 370.00,135.37 370.50,131.90 371.00,128.50 371.50,125.18 372.00,121.95 372.50,118.81 373.00,115.79 373.50,113.25 374.00,113.25 374.50,113.25 375.00,113.25 375.50,113.25 376.00,113.25 376.50,113.25 377.00,113.25 377.50,113.25 378.00,113.25 378.50,113.25 379.00,113.25 379.50,113.25 380.00,113.25 380.50,113.25 381.00,113.25 381.50,113.25 382.00,113.25 382.50,113.25 383.00,113.25 383.50,113.25 384.00,113.25 384.50,113.25 385.00,113.25 385.50,113.25 386.00,113.25 386.50,113.25 387.00,113.25 387.50,113.25 388.00,113.25 388.50,113.25 389.00,113.25 389.50,113.25 390.00,113.25 390.50,115.08 391.00,118.08 391.50,121.19 392.00,124.40 392.50,127.70 393.00,131.08 393.50,134.53 394.00,138.05 394.50,141.61 395.00,145.22 395.50,148.85 396.00,152.51 396.50,156.17 397.00,159.84 397.50,163.49 398.00,167.12 398.50,170.71 399.00,174.27 399.50,177.77 400.00,181.20 400.50,184.57 401.00,187.85 401.50,191.04 402.00,194.12 402.50,197.10 403.00,199.96 403.50,202.69 404.00,205.28 404.50,207.73 405.00,210.03 405.50,212.18 406.00,214.16 406.50,215.98 407.00,217.62 407.50,219.08 408.00,220.36 408.50,221.46 409.00,222.36 409.50,223.08 410.00,223.60 410.50,223.92 411.00,224.05 411.50,223.98 412.00,223.71 412.50,223.25 413.00,222.60 413.50,221.75 414.00,220.71 414.50,219.49 415.00,218.08 415.50,216.49 416.00,214.72 416.50,212.79 417.00,210.69 417.50,208.44 418.00,206.03 418.50,203.48 419.00,200.79 419.50,197.97 420.00,195.03 420.50,191.97 421.00,188.81 421.50,185.56 422.00,182.22 422.50,178.81 423.00,175.32 423.50,171.78 424.00,168.20 424.50,164.58 425.00,160.93 425.50,157.27 426.00,153.61 426.50,149.95 427.00,146.30 427.50,142.69 428.00,139.11 428.50,135.58 429.00,132.11 429.50,128.71 430.00,125.38 430.50,122.14 431.00,119.00 431.50,115.96 432.00,113.25 432.50,113.25 433.00,113.25 433.50,113.25 434.00,113.25 434.50,113.25 435.00,113.25 435.50,113.25 436.00,113.25 436.50,113.25 437.00,113.25 437.50,113.25 438.00,113.25 438.50,113.25 439.00,113.25 439.50,113.25 440.00,113.25 440.50,113.25 441.00,113.25 441.50,113.25 442.00,113.25 442.50,113.25 443.00,113.25 443.50,113.25 444.00,113.25 444.50,113.25 445.00,113.25 445.50,113.25 446.00,113.25 446.50,113.25 447.00,113.25 447.50,113.25 448.00,113.25 448.50,113.25 449.00,114.90 449.50,117.89 450.00,121.00 450.50,124.20 451.00,127.50" fill="none" stroke="#0000ff" stroke-width="1.25" stroke-linejoin="round"/>
<polyline points="-2.00,162.58 -1.50,162.71 -1.00,162.82 -0.50,162.90 0.00,162.97 0.50,163.02 1.00,163.04 1.50,163.05 2.00,163.03 2.50,163.00 3.00,162.94 3.50,162.86 4.00,162.76 4.50,162.64 5.00,162.50 5.50,162.34 6.00,162.16 6.50,161.97 7.00,161.75 7.50,161.52 8.00,161.28 8.50,161.01 9.00,160.73 9.50,160.44 10.00,160.13 10.50,159.81 11.00,159.48 11.50,159.14 12.00,158.79 12.50,158.43 13.00,158.06 13.50,157.68 14.00,157.30 14.50,156.92 15.00,156.53 15.50,156.14 16.00,155.75 16.50,155.36 17.00,154.97 17.50,154.58 18.00,154.19 18.50,153.81 19.00,153.44 19.50,153.07 20.00,152.71 20.50,152.36 21.00,152.02 21.50,151.68 22.00,151.36 22.50,151.06 23.00,150.76 23.50,150.49 24.00,150.22 24.50,149.97 25.00,149.74 25.50,149.53 26.00,149.33 26.50,149.16 27.00,149.00 27.50,148.86 28.00,148.74 28.50,148.64 29.00,148.56 29.50,148.50 30.00,148.47 30.50,148.45 31.00,148.46 31.50,148.48 32.00,148.53 32.50,148.60 33.00,148.68 33.50,148.79 34.00,148.92 34.50,149.07 35.00,149.24 35.50,149.43 36.00,149.63 36.50,149.85 37.00,150.09 37.50,150.35 38.00,150.62 38.50,150.90 39.00,151.20 39.50,151.52 40.00,151.84 40.50,152.18 41.00,152.53 41.50,152.88 42.00,153.25 42.50,153.62 43.00,153.99 43.50,154.38 44.00,154.76 44.50,155.15 45.00,155.54 45.50,155.94 46.00,156.33 46.50,156.72 47.00,157.10 47.50,157.49 48.00,157.86 48.50,158.24 49.00,158.60 49.50,158.96 50.00,159.30 50.50,159.64 51.00,159.97 51.50,160.28 52.00,160.58 52.50,160.87 53.00,161.14 53.50,161.40 54.00,161.64 54.50,161.86 55.00,162.07 55.50,162.25 56.00,162.42 56.50,162.57 57.00,162.70 57.50,162.81 58.00,162.90 58.50,162.97 59.00,163.02 59.50,163.04 60.00,163.05 60.50,163.03 61.00,163.00 61.50,162.94 62.00,162.86 62.50,162.77 63.00,162.65 63.50,162.51 64.00,162.35 64.50,162.18 65.00,161.98 65.50,161.77 66.00,161.54 66.50,161.29 67.00,161.03 67.50,160.75 68.00,160.46 68.50,160.15 69.00,159.83 69.50,159.50 70.00,159.16 70.50,158.81 71.00,158.45 71.50,158.08 72.00,157.71 72.50,157.33 73.00,156.94 73.50,156.55 74.00,156.16 74.50,155.77 75.00,155.38 75.50,154.99 76.00,154.60 76.50,154.22 77.00,153.84 77.50,153.46 78.00,153.09 78.50,152.73 79.00,152.38 79.50,152.04 80.00,151.70 80.50,151.38 81.00,151.08 81.50,150.78 82.00,150.50 82.50,150.24 83.00,149.99 83.50,149.76 84.00,149.54 84.50,149.34 85.00,149.17 85.50,149.01 86.00,148.87 86.50,148.75 87.00,148.65 87.50,148.57 88.00,148.51 88.50,148.47 89.00,148.45 89.50,148.45 90.00,148.48 90.50,148.53 91.00,148.59 91.50,148.68 92.00,148.79 92.50,148.91 93.00,149.06 93.50,149.23 94.00,149.41 94.50,149.62 95.00,149.84 95.50,150.08 96.00,150.33 96.50,150.60 97.00,150.89 97.50,151.19 98.00,151.50 98.50,151.82 99.00,152.16 99.50,152.50 100.00,152.86 100.50,153.22 101.00,153.59 101.50,153.97 102.00,154.35 102.50,154.74 103.00,155.13 103.50,155.52 104.00,155.91 104.50,156.30 105.00,156.69 105.50,157.08 106.00,157.46 106.50,157.84 107.00,158.21 107.50,158.58 108.00,158.94 108.50,159.28 109.00,159.62 109.50,159.95 110.00,160.26 110.50,160.56 111.00,160.85 111.50,161.12 112.00,161.38 112.50,161.62 113.00,161.85 113.50,162.05 114.00,162.24 114.50,162.41 115.00,162.56 115.50,162.69 116.00,162.80 116.50,162.89 117.00,162.96 117.50,163.01 118.00,163.04 118.50,163.05 119.00,163.04 119.50,163.00 120.00,162.95 120.50,162.87 121.00,162.77 121.50,162.66 122.00,162.52 122.50,162.36 123.00,162.19 123.50,161.99 124.00,161.78 124.50,161.55 125.00,161.31 125.50,161.04 126.00,160.77 126.50,160.47 127.00,160.17 127.50,159.85 128.00,159.52 128.50,159.18 129.00,158.83 129.50,158.47 130.00,158.10 130.50,157.73 131.00,157.35 131.50,156.96 132.00,156.58 132.50,156.19 133.00,155.80 133.50,155.40 134.00,155.01 134.50,154.62 135.00,154.24 135.50,153.86 136.00,153.48 136.50,153.11 137.00,152.75 137.50,152.40 138.00,152.06 138.50,151.72 139.00,151.40 139.50,151.09 140.00,150.80 140.50,150.52 141.00,150.25 141.50,150.00 142.00,149.77 142.50,149.55 143.00,149.36 143.50,149.18 144.00,149.02 144.50,148.87 145.00,148.75 145.50,148.65 146.00,148.57 146.50,148.51 147.00,148.47 147.50,148.45 148.00,148.45 148.50,148.48 149.00,148.52 149.50,148.59 150.00,148.67 150.50,148.78 151.00,148.91 151.50,149.05 152.00,149.22 152.50,149.40 153.00,149.60 153.50,149.82 154.00,150.06 154.50,150.32 155.00,150.58 155.50,150.87 156.00,151.17 156.50,151.48 157.00,151.80 157.50,152.14 158.00,152.48 158.50,152.84 159.00,153.20 159.50,153.57 160.00,153.95 160.50,154.33 161.00,154.72 161.50,155.11 162.00,155.50 162.50,155.89 163.00,156.28 163.50,156.67 164.00,157.06 164.50,157.44 165.00,157.82 165.50,158.19 166.00,158.56 166.50,158.92 167.00,159.26 167.50,159.60 168.00,159.93 168.50,160.24 169.00,160.55 169.50,160.83 170.00,161.11 170.50,161.37 171.00,161.61 171.50,161.83 172.00,162.04 172.50,162.23 173.00,162.40 173.50,162.55 174.00,162.69 174.50,162.80 175.00,162.89 175.50,162.96 176.00,163.01 176.50,163.04 177.00,163.05 177.50,163.04 178.00,163.00 178.50,162.95 179.00,162.87 179.50,162.78 180.00,162.66 180.50,162.53 181.00,162.37 181.50,162.20 182.00,162.01 182.50,161.79 183.00,161.57 183.50,161.32 184.00,161.06 184.50,160.78 185.00,160.49 185.50,160.19 186.00,159.87 186.50,159.54 187.00,159.20 187.50,158.85 188.00,158.49 188.50,158.13 189.00,157.75 189.50,157.37 190.00,156.99 190.50,156.60 191.00,156.21 191.50,155.82 192.00,155.43 192.50,155.04 193.00,154.65 193.50,154.26 194.00,153.88 194.50,153.50 195.00,153.14 195.50,152.77 196.00,152.42 196.50,152.08 197.00,151.74 197.50,151.42 198.00,151.11 198.50,150.82 199.00,150.54 199.50,150.27 200.00,150.02 200.50,149.78 201.00,149.57 201.50,149.37 202.00,149.19 202.50,149.02 203.00,148.88 203.50,148.76 204.00,148.66 204.50,148.57 205.00,148.51 205.50,148.47 206.00,148.45 206.50,148.45 207.00,148.48 207.50,148.52 208.00,148.58 208.50,148.67 209.00,148.77 209.50,148.90 210.00,149.04 210.50,149.21 211.00,149.39 211.50,149.59 212.00,149.81 212.50,150.05 213.00,150.30 213.50,150.57 214.00,150.85 214.50,151.15 215.00,151.46 215.50,151.78 216.00,152.12 216.50,152.46 217.00,152.82 217.50,153.18 218.00,153.55 218.50,153.93 219.00,154.31 219.50,154.69 220.00,155.08 220.50,155.47 221.00,155.87 221.50,156.26 222.00,156.65 222.50,157.03 223.00,157.42 223.50,157.80 224.00,158.17 224.50,158.54 225.00,158.89 225.50,159.24 226.00,159.58 226.50,159.91 227.00,160.23 227.50,160.53 228.00,160.82 228.50,161.09 229.00,161.35 229.50,161.59 230.00,161.82 230.50,162.03 231.00,162.22 231.50,162.39 232.00,162.55 232.50,162.68 233.00,162.79 233.50,162.88 234.00,162.96 234.50,163.01 235.00,163.04 235.50,163.05 236.00,163.04 236.50,163.01 237.00,162.95 237.50,162.88 238.00,162.79 238.50,162.67 239.00,162.54 239.50,162.38 240.00,162.21 240.50,162.02 241.00,161.81 241.50,161.58 242.00,161.34 242.50,161.08 243.00,160.80 243.50,160.51 244.00,160.21 244.50,159.89 245.00,159.56 245.50,159.22 246.00,158.87 246.50,158.51 247.00,158.15 247.50,157.77 248.00,157.40 248.50,157.01 249.00,156.62 249.50,156.23 250.00,155.84 250.50,155.45 251.00,155.06 251.50,154.67 252.00,154.28 252.50,153.90 253.00,153.53 253.50,153.16 254.00,152.79 254.50,152.44 255.00,152.10 255.50,151.76 256.00,151.44 256.50,151.13 257.00,150.83 257.50,150.55 258.00,150.28 258.50,150.03 259.00,149.80 259.50,149.58 260.00,149.38 260.50,149.20 261.00,149.03 261.50,148.89 262.00,148.77 262.50,148.66 263.00,148.58 263.50,148.52 264.00,148.47 264.50,148.45 265.00,148.45 265.50,148.47 266.00,148.52 266.50,148.58 267.00,148.66 267.50,148.77 268.00,148.89 268.50,149.03 269.00,149.20 269.50,149.38 270.00,149.58 270.50,149.80 271.00,150.03 271.50,150.28 272.00,150.55 272.50,150.83 273.00,151.13 273.50,151.44 274.00,151.76 274.50,152.10 275.00,152.44 275.50,152.79 276.00,153.16 276.50,153.53 277.00,153.90 277.50,154.28 278.00,154.67 278.50,155.06 279.00,155.45 279.50,155.84 280.00,156.23 280.50,156.62 281.00,157.01 281.50,157.40 282.00,157.77 282.50,158.15 283.00,158.51 283.50,158.87 284.00,159.22 284.50,159.56 285.00,159.89 285.50,160.21 286.00,160.51 286.50,160.80 287.00,161.08 287.50,161.34 288.00,161.58 288.50,161.81 289.00,162.02 289.50,162.21 290.00,162.38 290.50,162.54 291.00,162.67 291.50,162.79 292.00,162.88 292.50,162.95 293.00,163.01 293.50,163.04 294.00,163.05 294.50,163.04 295.00,163.01 295.50,162.96 296.00,162.88 296.50,162.79 297.00,162.68 297.50,162.55 298.00,162.39 298.50,162.22 299.00,162.03 299.50,161.82 300.00,161.59 300.50,161.35 301.00,161.09 301.50,160.82 302.00,160.53 302.50,160.23 303.00,159.91 303.50,159.58 304.00,159.24 304.50,158.89 305.00,158.54 305.50,158.17 306.00,157.80 306.50,157.42 307.00,157.03 307.50,156.65 308.00,156.26 308.50,155.87 309.00,155.47 309.50,155.08 310.00,154.69 310.50,154.31 311.00,153.93 311.50,153.55 312.00,153.18 312.50,152.82 313.00,152.46 313.50,152.12 314.00,151.78 314.50,151.46 315.00,151.15 315.50,150.85 316.00,150.57 316.50,150.30 317.00,150.05 317.50,149.81 318.00,149.59 318.50,149.39 319.00,149.21 319.50,149.04 320.00,148.90 320.50,148.77 321.00,148.67 321.50,148.58 322.00,148.52 322.50,148.48 323.00,148.45 323.50,148.45 324.00,148.47 324.50,148.51 325.00,148.57 325.50,148.66 326.00,148.76 326.50,148.88 327.00,149.02 327.50,149.19 328.00,149.37 328.50,149.57 329.00,149.78 329.50,150.02 330.00,150.27 330.50,150.54 331.00,150.82 331.50,151.11 332.00,151.42 332.50,151.74 333.00,152.08 333.50,152.42 334.00,152.77 334.50,153.14 335.00,153.50 335.50,153.88 336.00,154.26 336.50,154.65 337.00,155.04 337.50,155.43 338.00,155.82 338.50,156.21 339.00,156.60 339.50,156.99 340.00,157.37 340.50,157.75 341.00,158.13 341.50,158.49 342.00,158.85 342.50,159.20 343.00,159.54 343.50,159.87 344.00,160.19 344.50,160.49 345.00,160.78 345.50,161.06 346.00,161.32 346.50,161.57 347.00,161.79 347.50,162.01 348.00,162.20 348.50,162.37 349.00,162.53 349.50,162.66 350.00,162.78 350.50,162.87 351.00,162.95 351.50,163.00 352.00,163.04 352.50,163.05 353.00,163.04 353.50,163.01 354.00,162.96 354.50,162.89 355.00,162.80 355.50,162.69 356.00,162.55 356.50,162.40 357.00,162.23 357.50,162.04 358.00,161.83 358.50,161.61 359.00,161.37 359.50,161.11 360.00,160.83 360.50,160.55 361.00,160.24 361.50,159.93 362.00,159.60 362.50,159.26 363.00,158.92 363.50,158.56 364.00,158.19 364.50,157.82 365.00,157.44 365.50,157.06 366.00,156.67 366.50,156.28 367.00,155.89 367.50,155.50 368.00,155.11 368.50,154.72 369.00,154.33 369.50,153.95 370.00,153.57 370.50,153.20 371.00,152.84 371.50,152.48 372.00,152.14 372.50,151.80 373.00,151.48 373.50,151.17 374.00,150.87 374.50,150.58 375.00,150.32 375.50,150.06 376.00,149.82 376.50,149.60 377.00,149.40 377.50,149.22 378.00,149.05 378.50,148.91 379.00,148.78 379.50,148.67 380.00,148.59 380.50,148.52 381.00,148.48 381.50,148.45 382.00,148.45 382.50,148.47 383.00,148.51 383.50,148.57 384.00,148.65 384.50,148.75 385.00,148.87 385.50,149.02 386.00,149.18 386.50,149.36 387.00,149.55 387.50,149.77 388.00,150.00 388.50,150.25 389.00,150.52 389.50,150.80 390.00,151.09 390.50,151.40 391.00,151.72 391.50,152.06 392.00,152.40 392.50,152.75 393.00,153.11 393.50,153.48 394.00,153.86 394.50,154.24 395.00,154.62 395.50,155.01 396.00,155.40 396.50,155.80 397.00,156.19 397.50,156.58 398.00,156.96 398.50,157.35 399.00,157.73 399.50,158.10 400.00,158.47 400.50,158.83 401.00,159.18 401.50,159.52 402.00,159.85 402.50,160.17 403.00,160.47 403.50,160.77 404.00,161.04 404.50,161.31 405.00,161.55 405.50,161.78 406.00,161.99 406.50,162.19 407.00,162.36 407.50,162.52 408.00,162.66 408.50,162.77 409.00,162.87 409.50,162.95 410.00,163.00 410.50,163.04 411.00,163.05 411.50,163.04 412.00,163.01 412.50,162.96 413.00,162.89 413.50,162.80 414.00,162.69 414.50,162.56 415.00,162.41 415.50,162.24 416.00,162.05 416.50,161.85 417.00,161.62 417.50,161.38 418.00,161.12 418.50,160.85 419.00,160.56 419.50,160.26 420.00,159.95 420.50,159.62 421.00,159.28 421.50,158.94 422.00,158.58 422.50,158.21 423.00,157.84 423.50,157.46 424.00,157.08 424.50,156.69 425.00,156.30 425.50,155.91 426.00,155.52 426.50,155.13 427.00,154.74 427.50,154.35 428.00,153.97 428.50,153.59 429.00,153.22 429.50,152.86 430.00,152.50 430.50,152.16 431.00,151.82 431.50,151.50 432.00,151.19 432.50,150.89 433.00,150.60 433.50,150.33 434.00,150.08 434.50,149.84 435.00,149.62 435.50,149.41 436.00,149.23 436.50,149.06 437.00,148.91 437.50,148.79 438.00,148.68 438.50,148.59 439.00,148.53 439.50,148.48 440.00,148.45 440.50,148.45 441.00,148.47 441.50,148.51 442.00,148.57 442.50,148.65 443.00,148.75 443.50,148.87 444.00,149.01 444.50,149.17 445.00,149.34 445.50,149.54 446.00,149.76 446.50,149.99 447.00,150.24 447.50,150.50 448.00,150.78 448.50,151.08 449.00,151.38 449.50,151.70 450.00,152.04 450.50,152.38 451.00,152.73" fill="none" stroke="#ff0000" stroke-width="1.25" stroke-linejoin="round"/>
</g>
<line x1="236.50" y1="41.00" x2="236.50" y2="270.50" stroke="#00ffff" stroke-width="1.2" />
<line x1="265.50" y1="41.00" x2="265.50" y2="270.50" stroke="#ffff00" stroke-width="1.2" />
<polygon points="229.8,35 243.2,35 236.5,41.5" fill="#00e8e8"/>
<polygon points="256.8,33 274.2,33 265.5,41.5" fill="#ffff00"/>
<text x="236.5" y="39.3" text-anchor="middle" style="font-size:6px;font-weight:bold;fill:#000">1</text>
<text x="265.5" y="38.6" text-anchor="middle" style="font-size:7px;font-weight:bold;fill:#000">2</text>
<path d="M234,165.5 v-3.5 l2.5,-3 l2.5,3 v3.5 z" fill="none" stroke="#00ffff" stroke-width="1.1"/>
<path d="M263,150.5 v-3.5 l2.5,-3 l2.5,3 v3.5 z" fill="none" stroke="#ffff00" stroke-width="1.1"/>
<rect x="0.00" y="280.30" width="460.50" height="1.00" fill="#b4b4b4" />
<rect x="0.00" y="281.30" width="460.50" height="17.00" fill="#f0f0f0" />
<rect x="0.00" y="281.50" width="171.00" height="11.50" fill="#c9c9c9" />
<polyline points="450.50,283.50 454.50,287.50 450.50,291.50" fill="none" stroke="#555" stroke-width="1.6" />
<rect x="0.00" y="298.00" width="312.00" height="58.50" fill="#ffffff" />
<rect x="0.00" y="298.00" width="312.00" height="1.30" fill="#7d7d7d" />
<rect x="311.00" y="298.00" width="1.00" height="58.50" fill="#e3e3e3" />
<rect x="0.00" y="356.00" width="312.00" height="1.00" fill="#e3e3e3" />
<text x="31.5" y="311" text-anchor="middle" class="ui"><tspan class="uic">通道</tspan>_A</text>
<text x="111.5" y="311" text-anchor="middle" class="ui"><tspan class="uic">通道</tspan>_B</text>
<text x="29.5" y="324" text-anchor="middle" class="ro">-97.697 mV</text>
<text x="108.5" y="324" text-anchor="middle" class="ro">-8.979 V</text>
<text x="29.5" y="337" text-anchor="middle" class="ro">98.855 mV</text>
<text x="108.5" y="337" text-anchor="middle" class="ro">5.560 V</text>
<text x="29.5" y="350" text-anchor="middle" class="ro">196.552 mV</text>
<text x="108.5" y="350" text-anchor="middle" class="ro">14.538 V</text>
<rect x="320.50" y="305.50" width="60.00" height="19.50" fill="#e1e1e1" stroke="#adadad" stroke-width="1" />
<text x="350.50" y="319.75" text-anchor="middle" class="uic">反向</text>
<rect x="320.50" y="333.50" width="60.00" height="19.50" fill="#e1e1e1" stroke="#adadad" stroke-width="1" />
<text x="350.50" y="347.75" text-anchor="middle" class="uic">保存</text>
<text x="390.50" y="358.00" class="uic" >外触发</text>
<circle cx="437.5" cy="354.3" r="5.8" fill="#fff" stroke="#c4c4c4" stroke-width="1"/>
<circle cx="437.5" cy="354.3" r="3.2" fill="#cfcfcf"/>
<line x1="4.50" y1="371.50" x2="11.00" y2="371.50" stroke="#dcdcdc" stroke-width="1" />
<line x1="48.00" y1="371.50" x2="151.00" y2="371.50" stroke="#dcdcdc" stroke-width="1" />
<line x1="5.00" y1="371.50" x2="5.00" y2="421.00" stroke="#dcdcdc" stroke-width="1" />
<text x="13" y="375" class="ui"><tspan class="uic">通道</tspan> A</text>
<line x1="151.00" y1="371.50" x2="157.50" y2="371.50" stroke="#dcdcdc" stroke-width="1" />
<line x1="194.50" y1="371.50" x2="299.50" y2="371.50" stroke="#dcdcdc" stroke-width="1" />
<line x1="151.50" y1="371.50" x2="151.50" y2="421.00" stroke="#dcdcdc" stroke-width="1" />
<text x="159.5" y="375" class="ui"><tspan class="uic">通道</tspan> B</text>
<line x1="299.50" y1="371.50" x2="305.50" y2="371.50" stroke="#dcdcdc" stroke-width="1" />
<line x1="333.50" y1="371.50" x2="460.00" y2="371.50" stroke="#dcdcdc" stroke-width="1" />
<line x1="300.00" y1="371.50" x2="300.00" y2="421.00" stroke="#dcdcdc" stroke-width="1" />
<text x="307.5" y="375" class="ui"><tspan class="uic">触发</tspan></text>
<line x1="150.50" y1="371.50" x2="150.50" y2="421.00" stroke="#dcdcdc" stroke-width="1" />
<line x1="299.00" y1="371.50" x2="299.00" y2="421.00" stroke="#dcdcdc" stroke-width="1" />
<text x="7.50" y="393.00" class="uic" >刻度<tspan style="font-weight:bold" dx="1">:</tspan></text>
<rect x="56.50" y="378.00" width="91.00" height="18.00" fill="#ffffff" stroke="#7a7a7a" stroke-width="1" />
<text x="61.00" y="391.10" class="in">500 mV/Div</text>
<text x="7.5" y="414" class="ui">Y <tspan class="uic">轴位移(格)<tspan style="font-weight:bold" dx="1">:</tspan></tspan></text>
<rect x="88.50" y="398.50" width="59.00" height="18.50" fill="#ffffff" stroke="#7a7a7a" stroke-width="1" />
<text x="93.00" y="411.60" class="in">-0</text>
<text x="154.00" y="393.00" class="uic" >刻度<tspan style="font-weight:bold" dx="1">:</tspan></text>
<rect x="205.50" y="378.00" width="89.50" height="18.00" fill="#ffffff" stroke="#7a7a7a" stroke-width="1" />
<text x="209.00" y="391.10" class="in">5&#160; V/Div</text>
<text x="154" y="414" class="ui">Y <tspan class="uic">轴位移(格)<tspan style="font-weight:bold" dx="1">:</tspan></tspan></text>
<rect x="236.50" y="398.50" width="58.50" height="18.50" fill="#ffffff" stroke="#7a7a7a" stroke-width="1" />
<text x="241.00" y="411.60" class="in">-0</text>
<text x="304.00" y="393.50" class="uic" >边沿<tspan style="font-weight:bold" dx="1">:</tspan></text>
<text x="304.00" y="414.50" class="uic" >水平<tspan style="font-weight:bold" dx="1">:</tspan></text>
<rect x="356.50" y="382.50" width="15.50" height="14.00" fill="#cce4f7" stroke="#005499" stroke-width="1" />
<polyline points="359.50,393.50 364.50,393.50 364.50,386.50 368.50,386.50" fill="none" stroke="#000" stroke-width="1.3" />
<polyline points="362.30,390.80 364.50,388.80 366.20,390.80" fill="none" stroke="#000" stroke-width="1" />
<rect x="374.50" y="382.50" width="15.00" height="14.00" fill="#e1e1e1" stroke="#adadad" stroke-width="1" />
<polyline points="377.50,385.50 382.00,385.50 382.00,392.50 386.00,392.50" fill="none" stroke="#000" stroke-width="1.3" />
<polyline points="379.80,388.20 382.00,390.20 384.00,388.20" fill="none" stroke="#000" stroke-width="1" />
<rect x="395.50" y="382.50" width="16.00" height="16.00" fill="#cce4f7" stroke="#005499" stroke-width="1" />
<text x="403.5" y="394.5" text-anchor="middle" class="ui">A</text>
<rect x="414.50" y="382.50" width="16.50" height="16.00" fill="#cccccc" stroke="#bfbfbf" stroke-width="1" />
<text x="422.8" y="394.5" text-anchor="middle" class="dis">B</text>
<rect x="434.50" y="382.50" width="21.50" height="16.00" fill="#cccccc" stroke="#bfbfbf" stroke-width="1" />
<text x="445.2" y="394.5" text-anchor="middle" class="dis">Ext</text>
<rect x="355.50" y="402.30" width="71.50" height="21.20" fill="#ffffff" stroke="#7a7a7a" stroke-width="1" />
<text x="358.80" y="416.20" class="in">0</text>
<rect x="427.00" y="402.30" width="29.50" height="21.20" fill="#ffffff" stroke="#7a7a7a" stroke-width="1" />
<text x="434.60" y="416.20" class="in">V</text>
</g>
</svg></body></html>
